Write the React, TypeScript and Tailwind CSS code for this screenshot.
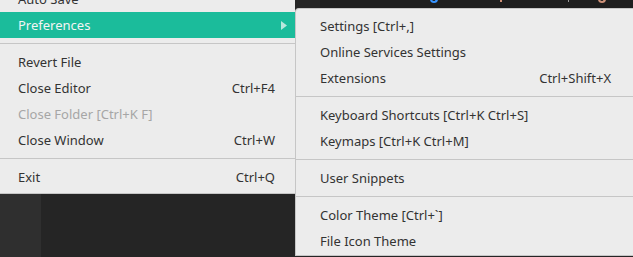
import React from "react";

type Item = { label: string; shortcut?: string; disabled?: boolean; active?: boolean; submenu?: boolean } | "sep";

const fileMenu: Item[] = [
  { label: "Auto Save" },
  { label: "Preferences", active: true, submenu: true },
  "sep",
  { label: "Revert File" },
  { label: "Close Editor", shortcut: "Ctrl+F4" },
  { label: "Close Folder [Ctrl+K F]", disabled: true },
  { label: "Close Window", shortcut: "Ctrl+W" },
  "sep",
  { label: "Exit", shortcut: "Ctrl+Q" },
];

const prefMenu: Item[] = [
  { label: "Settings [Ctrl+,]" },
  { label: "Online Services Settings" },
  { label: "Extensions", shortcut: "Ctrl+Shift+X" },
  "sep",
  { label: "Keyboard Shortcuts [Ctrl+K Ctrl+S]" },
  { label: "Keymaps [Ctrl+K Ctrl+M]" },
  "sep",
  { label: "User Snippets" },
  "sep",
  { label: "Color Theme [Ctrl+`]" },
  { label: "File Icon Theme" },
];

const MenuRows: React.FC<{ items: Item[]; textPad: string; shortPad: string }> = ({ items, textPad, shortPad }) => (
  <>
    {items.map((item, i) => {
      if (item === "sep") {
        return (
          <div key={i} className="h-[11px] flex items-center">
            <div className="h-px w-full bg-[#c6c6c6]" />
          </div>
        );
      }
      return (
        <div
          key={i}
          className={`h-[26px] pt-px flex items-center justify-between ${textPad} ${shortPad} ${
            item.active ? "bg-[#1bbc9b] text-[#f4f4f4]" : item.disabled ? "text-[#a6a6a6]" : "text-[#333333]"
          }`}
        >
          <span>{item.label}</span>
          {item.shortcut && <span>{item.shortcut}</span>}
          {item.submenu && (
            <svg width="6" height="9" viewBox="0 0 6 9" className="-mr-[12px]">
              <path d="M0 0 L6 4.5 L0 9 Z" fill="#b9e7dc" />
            </svg>
          )}
        </div>
      );
    })}
  </>
);

export default function App() {
  return (
    <div
      className="w-[633px] h-[257px] overflow-hidden flex bg-[#252525] text-[13px]"
      style={{ fontFamily: '"Noto Sans", "Open Sans", sans-serif' }}
    >
      <div className="w-[295px] flex flex-col shrink-0">
        <div className="bg-[#ececec] -mt-[14px] pb-[3px] border-b border-[#c6c6c6]">
          <MenuRows items={fileMenu} textPad="pl-[18px]" shortPad="pr-[20px]" />
        </div>
        <div className="flex flex-1">
          <div className="w-[41px] bg-[#2f2f2f]" />
          <div className="flex-1 bg-[#252525]" />
        </div>
      </div>
      <div className="flex-1 flex flex-col">
        <div className="h-[8px] flex shrink-0 overflow-hidden bg-[#1e1e1e]">
          <div className="w-[25px] bg-[#252525]" />
          <div className="relative flex-1">
            <span className="absolute left-[110px] -top-[3px] w-[8px] h-[6px] rounded-b-full border-2 border-t-0 border-[#3794ff]" />
            <span className="absolute left-[180px] top-0 w-[2px] h-[2px] bg-[#ce9178]" />
            <span className="absolute left-[248px] top-0 w-[1px] h-[2px] bg-[#9a9a9a]" />
            <span className="absolute left-[278px] -top-[3px] w-[8px] h-[6px] rounded-b-full border-2 border-t-0 border-[#ce9178]" />
          </div>
        </div>
        <div className="flex-1 bg-[#ececec] border-l border-t border-b border-[#c6c6c6] rounded-tl-[4px] pt-[4px] mb-[1px]">
          <MenuRows items={prefMenu} textPad="pl-[24px]" shortPad="pr-[22px]" />
        </div>
      </div>
    </div>
  );
}
